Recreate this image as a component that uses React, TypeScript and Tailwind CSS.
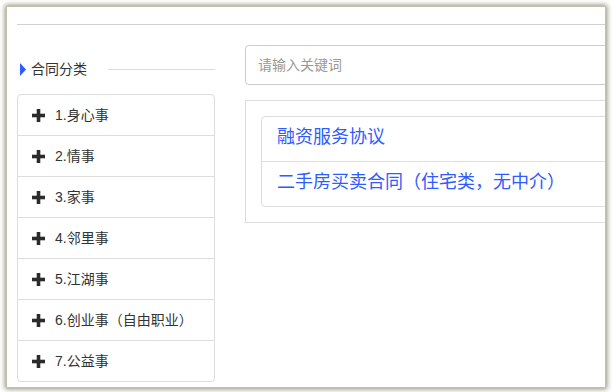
import React from "react";

const font = { fontFamily: '"Liberation Sans", "Noto Sans CJK SC", sans-serif' };

const categories = [
  "1.身心事",
  "2.情事",
  "3.家事",
  "4.邻里事",
  "5.江湖事",
  "6.创业事（自由职业）",
  "7.公益事",
];

const results = ["融资服务协议", "二手房买卖合同（住宅类，无中介）"];

function Plus() {
  return (
    <svg width="13" height="13" viewBox="0 0 13 13" className="shrink-0">
      <rect x="0" y="4.7" width="13" height="3.6" fill="#2b2b2b" />
      <rect x="4.7" y="0" width="3.6" height="13" fill="#2b2b2b" />
    </svg>
  );
}

export default function App() {
  return (
    <div className="w-[612px] h-[392px] bg-white pl-[7px] pt-[7px]" style={font}>
      <div className="w-[598px] h-[380px] bg-white overflow-hidden shadow-[0_0_0_1px_#c0c0ae,0_0_5px_2px_rgba(115,115,80,0.8)]">
        <div className="ml-[10px] w-[700px] h-[18px] border-b border-[#d2d2d2]" />
        <div className="flex ml-[10px]">
          <div className="w-[198px] shrink-0">
            <div className="mt-[34px] h-[20px] flex items-center">
              <svg width="6" height="13" viewBox="0 0 6 13" className="ml-[3px] shrink-0">
                <polygon points="0,0 6,6.5 0,13" fill="#2f5bff" />
              </svg>
              <span className="ml-[5px] text-[14px] text-[#333] leading-[20px]">合同分类</span>
              <div className="ml-[21px] flex-1 h-px bg-[#dcdcdc]" />
            </div>
            <div className="mt-[15px] border border-[#dddddd] rounded-[4px] divide-y divide-[#dddddd]">
              {categories.map((c) => (
                <div key={c} className="box-content h-[40px] flex items-center pl-[14px] gap-[10px]">
                  <Plus />
                  <span className="text-[14px] text-[#333]">{c}</span>
                </div>
              ))}
            </div>
          </div>
          <div className="ml-[30px] w-[520px] shrink-0">
            <div className="mt-[20px] h-[40px] border border-[#cccccc] rounded-[4px] flex items-center px-[12px]">
              <span className="text-[14px] text-[#999]">请输入关键词</span>
            </div>
            <div className="mt-[15px] border border-[#dddddd] p-[15px]">
              <div className="border border-[#dddddd] rounded-[4px] divide-y divide-[#dddddd]">
                {results.map((r) => (
                  <div key={r} className="box-content h-[44px] flex items-center px-[15px] pb-0">
                    <span className="text-[18px] text-[#2f5bff] -mt-[4px]">{r}</span>
                  </div>
                ))}
              </div>
            </div>
          </div>
        </div>
      </div>
    </div>
  );
}
